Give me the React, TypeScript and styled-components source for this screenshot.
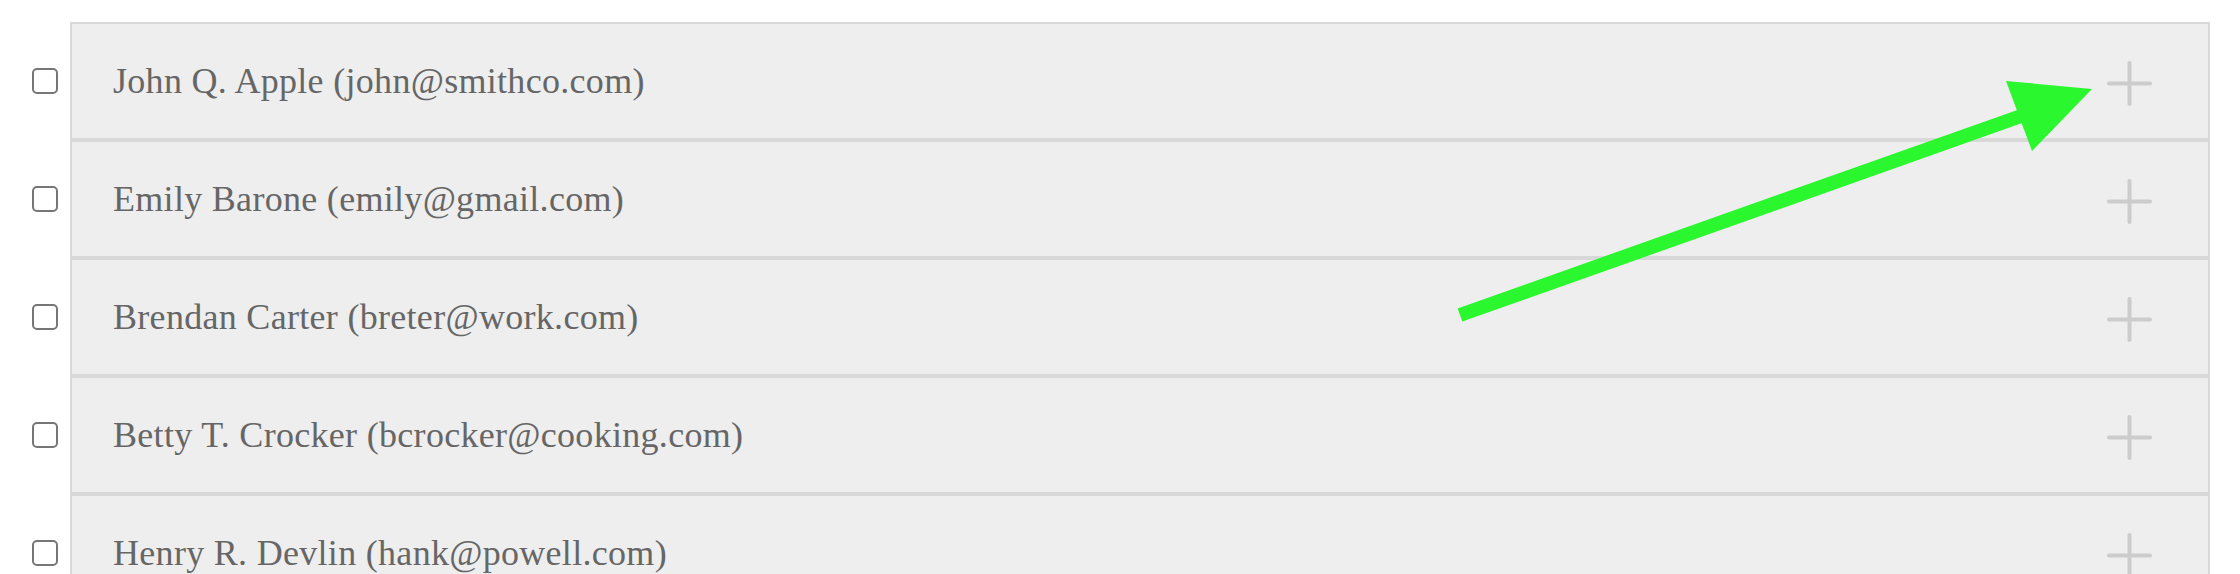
import React from 'react';
import styled, { createGlobalStyle } from 'styled-components';

interface Contact {
    name: string;
    email: string;
}

const contacts: Contact[] = [
    { name: 'John Q. Apple', email: 'john@smithco.com' },
    { name: 'Emily Barone', email: 'emily@gmail.com' },
    { name: 'Brendan Carter', email: 'breter@work.com' },
    { name: 'Betty T. Crocker', email: 'bcrocker@cooking.com' },
    { name: 'Henry R. Devlin', email: 'hank@powell.com' },
];

const GlobalStyle = createGlobalStyle`
    html, body {
        margin: 0;
        padding: 0;
        background: #ffffff;
        overflow: hidden;
    }
`;

const Page = styled.div`
    position: relative;
    width: 2240px;
    height: 574px;
    padding-top: 22px;
    box-sizing: border-box;
    overflow: hidden;
`;

const List = styled.div`
    display: flex;
    flex-direction: column;
`;

const Line = styled.div`
    display: flex;
    align-items: center;
`;

const CheckCell = styled.div`
    flex: 0 0 70px;
    display: flex;
    align-items: center;
    padding-left: 32px;
    box-sizing: border-box;
`;

const Check = styled.span`
    display: block;
    width: 26px;
    height: 26px;
    box-sizing: border-box;
    border: 2px solid #767676;
    border-radius: 5px;
    background: #ffffff;
`;

const Row = styled.div`
    flex: 0 0 2140px;
    height: 118px;
    box-sizing: border-box;
    border: 2px solid #d8d8d8;
    background: #eeeeee;
    display: flex;
    align-items: center;
    justify-content: space-between;
    padding: 0 56px 0 41px;
    font-family: 'Liberation Serif', 'DejaVu Serif', serif;
    font-size: 36px;
    letter-spacing: 0.3px;
    color: #666666;
`;

const AddIcon = styled.svg`
    width: 45px;
    height: 45px;
    margin-top: 5px;
    flex: 0 0 auto;
`;

const Overlay = styled.svg`
    position: absolute;
    left: 0;
    top: 0;
    pointer-events: none;
`;

const Plus = () => (
    <AddIcon viewBox="0 0 45 45">
        <path d="M22.5 2v41M2 22.5h41" stroke="#cccccc" strokeWidth="4" strokeLinecap="round" fill="none" />
    </AddIcon>
);

const App = () => (
    <Page>
        <GlobalStyle />
        <List>
            {contacts.map((c) => (
                <Line key={c.email}>
                    <CheckCell>
                        <Check />
                    </CheckCell>
                    <Row>
                        <span>
                            {c.name} ({c.email})
                        </span>
                        <Plus />
                    </Row>
                </Line>
            ))}
        </List>
        <Overlay width="2240" height="574" viewBox="0 0 2240 574">
            <line x1="1460" y1="315" x2="2024" y2="115" stroke="#2af72d" strokeWidth="14" />
            <polygon points="2006,81 2092,89 2032,151" fill="#2af72d" />
        </Overlay>
    </Page>
);

export default App;
